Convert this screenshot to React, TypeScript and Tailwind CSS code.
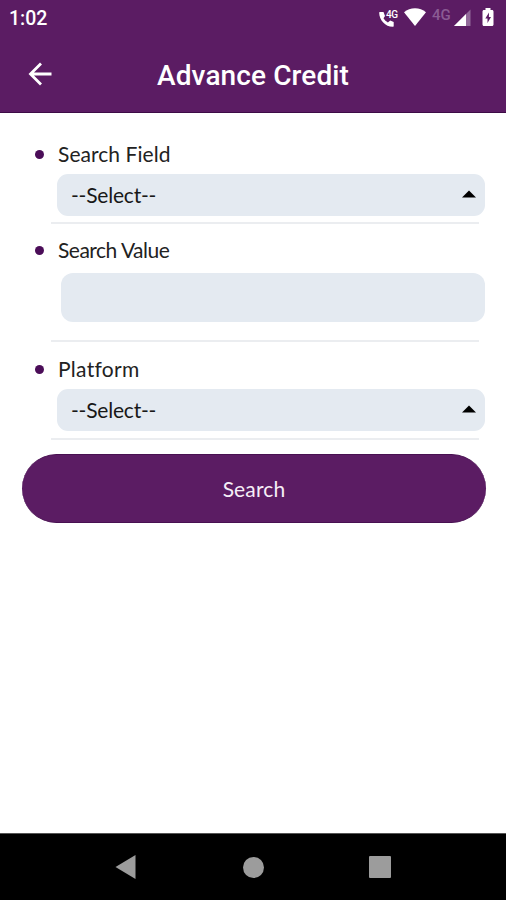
import type { ReactNode } from "react";

function StatusBar() {
  return (
    <div className="flex h-9 items-center justify-between pl-[9px] pr-[12px] text-white">
      <span className="pt-px font-['Roboto',sans-serif] text-[19.5px] font-medium leading-none">1:02</span>
      <div className="flex h-full items-start pt-[7px]">
        <svg width="22" height="21" viewBox="0 0 22 21" className="mr-[3px]">
          <path d="M1 5h3.500l1.500 4-1.500 2.300c1.100 2 2.600 3.200 4.400 4.100l2.300-1.900 3.500 1.500V19c0 .6-.4.800-1 .8C6.500 19.800.2 13 .2 6 .2 5.300.4 5 1 5Z" fill="currentColor" />
          <text x="7" y="10.500" fill="currentColor" fontFamily="Roboto, sans-serif" fontSize="10" fontWeight="500" textLength="12">4G</text>
        </svg>
        <svg width="22" height="20" viewBox="0 0 22 20" className="mr-[6px]">
          <path d="M0 5.200C6-.1 16-.1 22 5.200L11 19Z" fill="currentColor" />
        </svg>
        <span className="mr-[2px] w-5 whitespace-nowrap font-['Roboto',sans-serif] text-[15px] font-medium leading-4 text-[#8a5b93]">4G</span>
        <svg width="17" height="20" viewBox="0 0 17 20" className="mr-[11px]">
          <path d="M0 19 16.500 2.500V19Z" fill="#92699a" />
          <path d="M0 19 12 7v12Z" fill="currentColor" />
        </svg>
        <svg width="12" height="20" viewBox="0 0 12 20">
          <path d="M3.500 1h5v2H10c.9 0 1.500.6 1.500 1.500v13c0 .9-.6 1.500-1.500 1.500H2c-.9 0-1.500-.6-1.500-1.500v-13C.5 3.600 1.100 3 2 3h1.500Z" fill="currentColor" />
          <path d="M7 5.500 3.300 11.500h2.200V16L9 10H6.900Z" fill="#5b1c63" />
        </svg>
      </div>
    </div>
  );
}

function Header() {
  return (
    <header className="h-[113px] shrink-0 border-b border-[#3d0b46] bg-[#5b1c63] text-white">
      <StatusBar />
      <div className="grid h-[76px] grid-cols-[80px_1fr_80px] items-center">
        <svg width="24" height="24" viewBox="0 0 24 24" fill="none" stroke="currentColor" strokeWidth="2.800" className="ml-7">
          <path d="M23.500 12H2.500M13 1.500 2.500 12 13 22.500" />
        </svg>
        <h1 className="whitespace-nowrap pt-[3px] text-center font-['Roboto',sans-serif] text-[28px] font-medium leading-8 tracking-[0.1px]">Advance Credit</h1>
      </div>
    </header>
  );
}

function Field({ label, className, labelClass = "", children }: { label: string; className: string; labelClass?: string; children: ReactNode }) {
  return (
    <div className={className}>
      <div className="flex h-[26px] items-center pl-[35px]">
        <span className="mb-[2px] mr-[14px] h-[9px] w-[9px] rounded-full bg-[#4b0d58]" />
        <span className={`mb-[2px] text-[21px] leading-[26px] text-[#222] ${labelClass}`}>{label}</span>
      </div>
      {children}
    </div>
  );
}

function Select() {
  return (
    <div className="ml-[57px] mr-[21px] mt-[6px] flex h-[42px] items-center justify-between rounded-[11px] bg-[#e4eaf1] pl-[14px] pr-[9px]">
      <span className="text-[21px] leading-[26px] tracking-[-0.2px] text-[#181818]">--Select--</span>
      <svg width="14" height="8" viewBox="0 0 14 8" className="mb-[2px]">
        <path d="M0 7.500 7 .5l7 7Z" fill="#000" />
      </svg>
    </div>
  );
}

function Divider({ className }: { className: string }) {
  return <div className={`ml-[51px] mr-[27px] h-[2px] bg-[#ebedf0] ${className}`} />;
}

export default function App() {
  return (
    <div className="flex h-[900px] w-[506px] flex-col overflow-hidden bg-white font-['Lato',sans-serif]">
      <Header />
      <main className="flex-1">
        <Field label="Search Field" className="pt-[29px]" labelClass="tracking-[0.05px]">
          <Select />
          <Divider className="mt-[6px]" />
        </Field>
        <Field label="Search Value" className="pt-[14px]" labelClass="tracking-[-0.5px]">
          <div className="ml-[61px] mr-[21px] mt-[9px] h-[49px] rounded-[12px] bg-[#e4eaf1]" />
          <Divider className="mt-[18px]" />
        </Field>
        <Field label="Platform" className="pt-[15px]" labelClass="tracking-[0.3px] [font-variant-ligatures:none]">
          <Select />
          <Divider className="mt-[7px]" />
        </Field>
        <button className="ml-[22px] mt-[14px] flex h-[69px] w-[464px] items-center justify-center rounded-full border-y border-[#481051] bg-[#5b1c63] pt-px text-[21px] tracking-[0.15px] text-[#f6eef7]">
          Search
        </button>
      </main>
      <nav className="flex h-[67px] shrink-0 items-center border-t border-[#555] bg-black pl-[115px]">
        <svg width="21" height="24" viewBox="0 0 21 24">
          <path d="M.5 12 20.500 0v24Z" fill="#9c9c9c" />
        </svg>
        <span className="ml-[107px] h-[21px] w-[21px] rounded-full bg-[#9c9c9c]" />
        <span className="ml-[105px] h-[22px] w-[22px] rounded-[1px] bg-[#9c9c9c]" />
      </nav>
    </div>
  );
}
